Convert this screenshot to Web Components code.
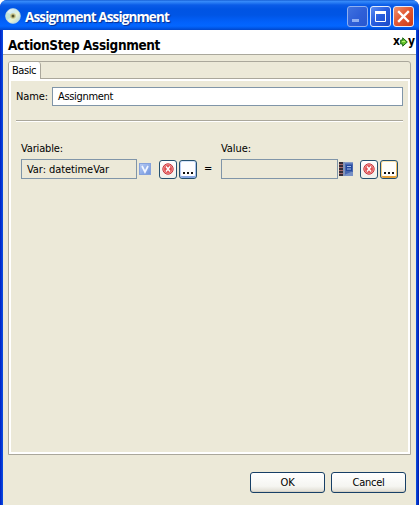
<!DOCTYPE html>
<html lang="en"><head><meta charset="utf-8"><title>Assignment Assignment</title>
<style>html,body{margin:0;width:419px;height:505px;overflow:hidden;background:#fff}</style></head>
<body><assignment-dialog></assignment-dialog>
<script>
const define=(name,html,setup)=>customElements.define(name,class extends HTMLElement{
  connectedCallback(){
    if(this.shadowRoot)return;
    const t=document.createElement('template');
    t.innerHTML='<style>*{box-sizing:border-box}:host{box-sizing:border-box}</style>'+html;
    this.attachShadow({mode:'open'}).append(t.content.cloneNode(true));
    if(setup)setup(this);
  }
});

/* Text whose tracking is adjusted to a given width */
define('fit-text',`<style>:host{display:inline-block;white-space:pre;flex:none}span{display:inline-block}</style><span></span>`,el=>{
  const s=el.shadowRoot.querySelector('span');
  s.textContent=el.getAttribute('text');
  const target=+el.getAttribute('fit');
  if(target){
    const w=s.getBoundingClientRect().width;
    s.style.letterSpacing=((target-w)/s.textContent.length)+'px';
    el.style.width=target+'px';
  }
});

define('window-button',`<style>
:host{display:block;width:21px;height:21px;border:1px solid #e4ecfb;border-radius:3px;background:linear-gradient(135deg,#5c8df2,#2a5fe0 45%,#1a49c8)}
:host([kind=min]){border-color:#8fb0f0;background:linear-gradient(135deg,#3f72e0,#2f60d8 50%,#2857cf)}
:host([kind=close]){background:linear-gradient(135deg,#f0936f,#e25a35 45%,#cc3a14)}
svg{display:block}</style><svg width="19" height="19"></svg>`,el=>{
  el.shadowRoot.querySelector('svg').innerHTML={
    min:'<rect x="4" y="12" width="7" height="3" fill="#8faff2"/>',
    max:'<path d="M4.5 5v9.5h10V5" fill="none" stroke="#fff"/><rect x="4" y="4" width="11" height="3" fill="#fff"/>',
    close:'<path d="M5 5l9 9M14 5l-9 9" stroke="#fff" stroke-width="2.4" stroke-linecap="square"/>'
  }[el.getAttribute('kind')];
});

define('title-bar',`<style>
:host{display:flex;height:30px;padding:6px 5px 0 5px;border-radius:7px 7px 0 0;color:#fff;font:bold 13.5px/20px "Open Sans","Noto Sans",sans-serif;
background:linear-gradient(#0a50c8 0,#3a8dfb 1px,#2478f2 3px,#0a5ce8 5px,#0054e3 9px,#0055e5 15px,#0261fb 22px,#0366ff 26px,#0058ea 28px,#0246c9 30px)}
svg{flex:none;margin-top:2px}fit-text{margin:1px auto 0 4px;text-shadow:1px 1px 1px #0a2f8c}.b{display:flex;gap:2px}</style>
<svg width="16" height="16"><defs><linearGradient id="d" x2="1" y2="1"><stop stop-color="#fff"/><stop offset=".35" stop-color="#cfe9f0"/><stop offset=".6" stop-color="#e8f2d0"/><stop offset="1" stop-color="#a8cde0"/></linearGradient></defs><circle cx="8" cy="8" r="7.4" fill="url(#d)" stroke="#b9d5e4" stroke-width=".7"/><path d="M8 8L2 4a7 7 0 0 0 0 8z" fill="#b9e1cd" opacity=".7"/><circle cx="8" cy="8" r="2.8" fill="#c8c48a"/><circle cx="8" cy="8" r="1.5" fill="#51532e"/></svg>
<fit-text text="Assignment Assignment" fit="144"></fit-text>
<div class="b"><window-button kind="min"></window-button><window-button kind="max"></window-button><window-button kind="close"></window-button></div>`);

define('step-header',`<style>
:host{display:flex;justify-content:space-between;height:25px;background:#fff;border-bottom:1px solid #aaa89c;padding:6px 1px 0 5px;color:#000;font:bold 13.5px/18px "DejaVu Sans Condensed","DejaVu Sans",sans-serif;font-stretch:condensed}
.xy{display:flex;margin-top:-3px;font-size:12px;line-height:17px}svg{margin-top:4px;flex:none}</style>
<fit-text text="ActionStep Assignment" fit="152"></fit-text>
<div class="xy"><fit-text text="x" fit="7"></fit-text><svg width="8" height="10"><path d="M.7 3h2V.8L7.3 5 2.700 9.200V7h-2z" fill="#65c62b" stroke="#1c6814"/><path d="M2 4.500h3" stroke="#b5ed70"/></svg><fit-text text="y" fit="7"></fit-text></div>`);

define('text-field',`<style>
:host{display:block;height:20px;border:1px solid #8095a8;padding:0 0 0 5px;line-height:19px;flex:none}
:host([editable]){background:#fff;height:19px;line-height:18px}</style><slot></slot>`);

define('xp-button',`<style>
:host{display:flex;justify-content:center;width:75px;height:21px;line-height:20px;border:1px solid #173f66;border-radius:3px;background:linear-gradient(#fff,#f5f5f1 70%,#dedbd0);box-shadow:inset 0 -1px #d5d1c5}</style><slot></slot>`);

define('icon-button',`<style>
:host{display:block;width:18px;height:19px;border:1px solid #24506f;border-radius:3px;background:linear-gradient(#fff,#f0f0ea);flex:none}
:host([kind=blue]){background:#fdfdff;box-shadow:inset 0 1px #d5e3fb,inset 1px 0 #b7cdf4,inset -1px 0 #a7c0ee,inset 0 -2px #86a6e2}
:host([kind=gold]){background:#fffefb;box-shadow:inset 0 1px #fbe3ae,inset 1px 0 #f7cf82,inset -1px 0 #f3bd5e,inset 0 -2px #e5a13a}
svg{display:block}</style><svg width="16" height="17"></svg>`,el=>{
  el.shadowRoot.querySelector('svg').innerHTML=el.getAttribute('kind')==='clear'
  ?'<circle cx="8" cy="8" r="5.200" fill="#df4b4d" stroke="#c8383e"/><circle cx="8" cy="8" r="4.300" fill="none" stroke="#f5b5b2" stroke-width=".7"/><path d="M6 5.500l4 5M10 5.500l-4 5" stroke="#fff" stroke-width="1.500"/>'
  :'<path d="M3 11h2v2H3zM7 11h2v2H7zM11 11h2v2h-2z" fill="#111"/>';
});

define('variable-icon',`<style>:host{display:block;flex:none}svg{display:block}</style><svg width="12" height="12"><defs><linearGradient id="v" x2="1" y2="1"><stop stop-color="#b8ccf5"/><stop offset="1" stop-color="#6f93dc"/></linearGradient></defs><rect x=".5" y=".5" width="11" height="11" fill="url(#v)" stroke="#86a2dc"/><path d="M3 3l3 6 3-6" fill="none" stroke="#f2f6ff" stroke-width="1.700"/></svg>`);

define('book-icon',`<style>:host{display:block;flex:none}svg{display:block}</style><svg width="15" height="15"><rect width="4" height="14" fill="#352b35"/><path d="M0 2.500h4M0 5.500h4M0 8.500h4M0 11.500h4" stroke="#a5686a"/><rect x="4" width="2" height="14" fill="#8094b8"/><path d="M6 .5h8v13H6z" fill="#4766b0"/><path d="M6 1h8" stroke="#7893cc"/><path d="M7 3h6v6H7z" fill="#254a9e"/><path d="M8 4.500h4M8 7h4" stroke="#a8bde9"/><path d="M5 13l7-3h2v4H4z" fill="#7790c5"/></svg>`);

define('value-picker',`<style>
:host{display:flex;flex-direction:column;width:177px;gap:3px}
.r{display:flex;align-items:flex-start}.i{width:22px;height:19px;padding:4px 0 0 2px}:host([book]) .i{padding:3px 0 0 1px}.b{display:flex;gap:2px;padding-top:1px}</style>
<slot name="label"></slot><div class="r"><slot name="field"></slot><div class="i"><slot name="icon"></slot></div><div class="b"><icon-button kind="clear"></icon-button><slot name="browse"></slot></div></div>`);

define('tab-panel',`<style>
:host{display:flex;flex-direction:column;height:394px;border:1px solid #aaa79b;border-radius:3px 3px 0 0;background:#ece9d8}
.tabs{height:17px;border-bottom:1px solid #aaa79b;flex:none}
.tab{width:32px;height:17px;background:#fff;border-right:1px solid #aaa79b;border-radius:2px 3px 0 0;padding-left:3px;line-height:18px}
.body{flex:1;border:2px solid #fff;border-right-width:2px;padding:6px 5px 0}</style>
<div class="tabs"><div class="tab"><fit-text text="Basic" fit="24"></fit-text></div></div><div class="body"><slot></slot></div>`);

define('assignment-dialog',`<style>
:host{display:flex;flex-direction:column;width:419px;height:505px;background:linear-gradient(90deg,#001fc2,#0a50e5 3px,#0a50e5 416px,#0019a8);border-radius:7px 7px 0 0;color:#000;font:11px/14px "DejaVu Sans Condensed","DejaVu Sans",sans-serif;font-stretch:condensed}
.content{flex:1;margin:0 3px;background:#ece9d8;display:flex;flex-direction:column}
tab-panel{margin:6px 5px 0}
.name{display:flex;line-height:20px;justify-content:space-between;margin:0 0}
.name text-field{width:351px}
.line{height:2px;background:#aaa79b;border-bottom:1px solid #fff;margin:13px 0 0}
.vars{display:flex;padding:20px 0 0 5px}
.eq{width:23px;padding:20px 0 0 6px}
.actions{display:flex;gap:6px;justify-content:flex-end;padding:17px 10px 0 0}</style>
<title-bar></title-bar>
<div class="content"><step-header></step-header>
<tab-panel><div class="name"><fit-text text="Name:" fit="32"></fit-text><text-field editable><fit-text text="Assignment" fit="55"></fit-text></text-field></div>
<div class="line"></div>
<div class="vars"><value-picker><fit-text slot="label" text="Variable:" fit="42"></fit-text><text-field slot="field" style="width:116px"><fit-text text="Var: datetimeVar" fit="82"></fit-text></text-field><variable-icon slot="icon"></variable-icon><icon-button slot="browse" kind="blue"></icon-button></value-picker>
<div class="eq"><fit-text text="=" fit="9"></fit-text></div>
<value-picker book><fit-text slot="label" text="Value:" fit="30"></fit-text><text-field slot="field" style="width:117px"></text-field><book-icon slot="icon"></book-icon><icon-button slot="browse" kind="gold"></icon-button></value-picker></div></tab-panel>
<div class="actions"><xp-button><fit-text text="OK" fit="14"></fit-text></xp-button><xp-button><fit-text text="Cancel" fit="32"></fit-text></xp-button></div></div>`);
</script></body></html>
